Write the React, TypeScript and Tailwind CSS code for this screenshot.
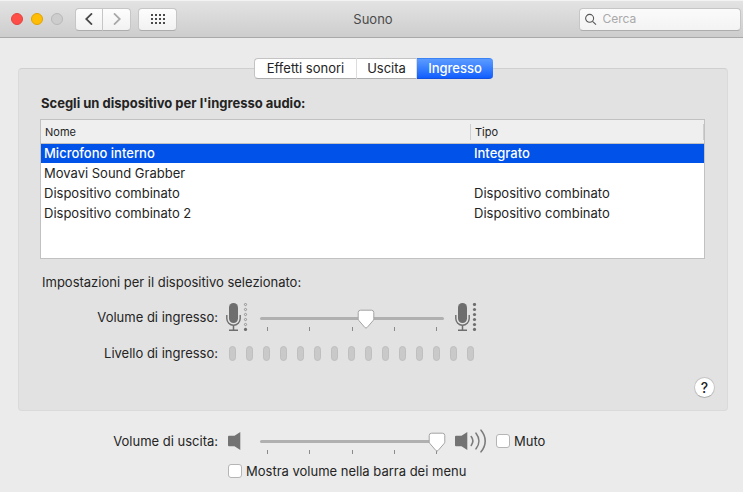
import { useState } from 'react';
import type { ReactNode } from 'react';

const tabs = [
  { label: 'Effetti sonori', width: 'w-[103px]' },
  { label: 'Uscita', width: 'w-[60px]' },
  { label: 'Ingresso', width: 'w-[76px]' },
];

const devices = [
  { name: 'Microfono interno', type: 'Integrato' },
  { name: 'Movavi Sound Grabber', type: '' },
  { name: 'Dispositivo combinato', type: 'Dispositivo combinato' },
  { name: 'Dispositivo combinato 2', type: 'Dispositivo combinato' },
];

const toolbarButton =
  'flex h-[23px] items-center justify-center border border-[#c6c6c6] border-b-[#adadad] bg-linear-to-b from-[#fdfdfd] to-[#f2f2f2]';

function Microphone({ full = false }: { full?: boolean }) {
  return (
    <svg width="23" height="28" viewBox="0 0 23 28" aria-hidden="true">
      <rect x="3" y="0" width="9" height="20" rx="4.5" fill="#6e6e6e" />
      <path d="M0.8 12v3.5a6.7 6.7 0 0 0 13.4 0V12" fill="none" stroke="#6e6e6e" strokeWidth="1.4" />
      <path d="M7.5 22.5v4.5M3 27.2h9" fill="none" stroke="#6e6e6e" strokeWidth="1.5" />
      {[1.5, 6.5, 11.5, 16.5, 21.5, 26.4].map((y) =>
        full || y > 26 ? (
          <circle key={y} cx="19.5" cy={y} r="1.6" fill="#6e6e6e" />
        ) : (
          <circle key={y} cx="19.5" cy={y} r="1.1" fill="none" stroke="#858585" strokeWidth="0.8" />
        ),
      )}
    </svg>
  );
}

function Speaker({ waves = false }: { waves?: boolean }) {
  return (
    <svg width="32" height="24" viewBox="0 0 32 24" aria-hidden="true">
      <path d="M0 7.8q0-1 1-1h5.5L12.3 3v18l-5.8-3.8H1q-1 0-1-1z" fill="#737373" />
      {waves && (
        <g fill="none" stroke="#7b7b7b" strokeWidth="1.6" strokeLinecap="round">
          <path d="M16.2 7.6c2 2.6 2 6.2 0 8.8" />
          <path d="M21 4.2c3.8 4.8 3.8 10.8 0 15.6" />
          <path d="M26 1.2c5.6 6.6 5.6 15 0 21.6" />
        </g>
      )}
    </svg>
  );
}

function Slider({ id, initial }: { id: string; initial: number }) {
  const [value, setValue] = useState(initial);

  return (
    <div className="relative h-7 w-[184px] self-start px-[7px] pt-[14px]">
      <div className="-mx-[7px] h-[3px] rounded-full bg-[#b0b0b0]" />
      <div className="mt-[7px] flex justify-between">
        {[0, 1, 2, 3, 4].map((tick) => (
          <span key={tick} className="h-1 w-px bg-[#8a8a8a]" />
        ))}
      </div>
      {/* Pointed knob, kept above the track */}
      <div className="pointer-events-none absolute inset-x-[7px] top-[6px]">
        <svg
          width="18"
          height="21"
          viewBox="0 0 18 21"
          className="relative -translate-x-1/2"
          style={{ left: `${value}%` }}
          aria-hidden="true"
        >
          <path
            d="M3.6 1.2h10.8q2.4 0 2.4 2.4v6.2q0 1-.8 1.9l-5.9 6.8q-1.1 1.2-2.2 0L2 11.7q-.8-.9-.8-1.9V3.6q0-2.4 2.4-2.4z"
            fill="#fff"
            stroke="#a3a3a3"
            strokeWidth="1"
          />
        </svg>
      </div>
      <input
        id={id}
        type="range"
        min={0}
        max={100}
        value={value}
        onChange={(e) => setValue(Number(e.target.value))}
        className="absolute inset-0 h-full w-full opacity-0"
      />
    </div>
  );
}

function Checkbox({ children }: { children: ReactNode }) {
  return (
    <label className="flex items-center gap-1">
      <input
        type="checkbox"
        className="size-[14px] appearance-none rounded-[3px] border border-[#b5b5b5] bg-white checked:bg-[#0a60ff]"
      />
      {children}
    </label>
  );
}

export default function App() {
  const [activeTab, setActiveTab] = useState('Ingresso');
  const [selected, setSelected] = useState(0);

  return (
    <div className="min-h-screen bg-[#ebebeb] pb-[11px] font-['Inter','Liberation_Sans',sans-serif] text-[13px] leading-5 text-[#242424]">
      <header className="grid h-[38px] grid-cols-[1fr_auto_1fr] items-center border-t border-b border-t-[#f3f3f3] border-b-[#a9a9a9] bg-linear-to-b from-[#e3e3e3] to-[#cdcdcd] pr-[2px] pl-[5px]">
        <div className="flex items-center pl-[6px]">
          <div className="flex gap-2">
            <button aria-label="Chiudi" className="size-3 rounded-full border border-[#e2443f] bg-[#ff4d47]" />
            <button aria-label="Riduci" className="size-3 rounded-full border border-[#e0a200] bg-[#ffbd05]" />
            <button aria-label="Ingrandisci" disabled className="size-3 rounded-full border border-[#b8b8b8] bg-[#cdcdcd]" />
          </div>
          <div className="ml-3 flex">
            <button aria-label="Indietro" className={`${toolbarButton} w-7 rounded-l-[4px]`}>
              <svg width="8" height="12" viewBox="0 0 8 12" fill="none" stroke="#484848" strokeWidth="1.8">
                <path d="M7 0.4 1.2 6 7 11.6" />
              </svg>
            </button>
            <button aria-label="Avanti" className={`${toolbarButton} w-7 rounded-r-[4px] border-l-0`}>
              <svg width="8" height="12" viewBox="0 0 8 12" fill="none" stroke="#a8a8a8" strokeWidth="1.8">
                <path d="M1 0.4 6.8 6 1 11.6" />
              </svg>
            </button>
          </div>
          <button aria-label="Mostra tutte" className={`${toolbarButton} ml-[7px] w-[39px] rounded-[4px]`}>
            <svg width="14" height="10" viewBox="0 0 14 10" fill="#4a4a4a">
              {[0, 4, 8].map((y) => [0, 4, 8, 12].map((x) => <rect key={`${x}-${y}`} x={x} y={y} width="2" height="2" />))}
            </svg>
          </button>
        </div>
        <h1 className="text-[#4a4a4a]">Suono</h1>
        <label className="flex h-[23px] w-[162px] items-center gap-[6px] justify-self-end rounded-[4px] border border-[#c6c6c6] border-b-[#adadad] bg-linear-to-b from-[#fbfbfb] to-[#f3f3f3] pl-[5px]">
          <svg width="13" height="13" viewBox="0 0 13 13" fill="none" stroke="#555" strokeWidth="1.2" aria-hidden="true">
            <circle cx="5.2" cy="5.2" r="4.5" />
            <path d="m8.5 8.5 3.9 3.9" />
          </svg>
          <input
            type="search"
            aria-label="Cerca"
            placeholder="Cerca"
            className="w-full min-w-0 bg-transparent text-[12px] outline-none placeholder:text-[#a9a9a9]"
          />
        </label>
      </header>

      <main className="mr-[15px] ml-[18px] pt-5">
        <div role="tablist" className="relative z-10 flex justify-center pl-px">
          {tabs.map((tab) => {
            const active = tab.label === activeTab;
            return (
              <button
                key={tab.label}
                role="tab"
                aria-selected={active}
                onClick={() => setActiveTab(tab.label)}
                className={`flex h-[21px] items-center justify-center border-y pb-px first:rounded-l-[4px] first:border-l last:rounded-r-[4px] ${tab.width} ${
                  active
                    ? 'border-y-[#3b82f5] border-b-[#1450e0] bg-linear-to-b from-[#5b9bff] to-[#0f5dff] font-medium text-white'
                    : 'border-r border-[#c3c3c3] border-r-[#dcdcdc] border-b-[#adadad] bg-white'
                }`}
              >
                {tab.label}
              </button>
            );
          })}
        </div>

        <section className="-mt-[11px] rounded-[4px] border border-[#dadada] border-t-[#cfcfcf] bg-[#e2e2e2] px-3 pt-6 pb-3">
          <div className="pr-[10px] pl-[9px]">
            <h2 className="pl-px font-bold">Scegli un dispositivo per l'ingresso audio:</h2>

            <div className="mt-[6px] min-h-[140px] border border-[#c1c1c1] bg-white">
              <table className="w-full table-fixed border-separate border-spacing-0 text-left">
                <thead>
                  <tr className="h-6 bg-[#efefef] text-[11px] leading-4">
                    <th className="w-[430px] border-b border-[#c1c1c1] p-0 font-normal">
                      <div className="border-r border-[#cfcfcf] pl-1">Nome</div>
                    </th>
                    <th className="border-b border-[#c1c1c1] p-0 font-normal">
                      <div className="border-r border-[#cfcfcf] pl-1">Tipo</div>
                    </th>
                  </tr>
                </thead>
                <tbody>
                  {devices.map((device, i) => (
                    <tr
                      key={device.name}
                      onClick={() => setSelected(i)}
                      className={`h-5 leading-[19px] ${i === selected ? 'bg-[#0052e8] font-medium text-white' : ''}`}
                    >
                      <td className="border-b border-white p-0 pl-[3px]">{device.name}</td>
                      <td className="border-b border-white p-0 pl-[3px]">{device.type}</td>
                    </tr>
                  ))}
                </tbody>
              </table>
            </div>

            <p className="mt-[13px] pl-[2px]">Impostazioni per il dispositivo selezionato:</p>

            <div className="mt-[11px] flex items-center">
              <label htmlFor="input-volume" className="w-[178px] pb-px text-right">
                Volume di ingresso:
              </label>
              <div className="ml-2 w-[34px]">
                <Microphone />
              </div>
              <Slider id="input-volume" initial={58} />
              <div className="ml-[11px]">
                <Microphone full />
              </div>
            </div>

            <div className="mt-3 flex items-center">
              <span id="level-label" className="w-[178px] text-right">
                Livello di ingresso:
              </span>
              <div role="meter" aria-labelledby="level-label" aria-valuenow={0} className="ml-[11px] flex gap-[10px]">
                {Array.from({ length: 15 }, (_, i) => (
                  <span key={i} className="h-[15px] w-[7px] rounded-full border border-[#bfbfbf] bg-[#c9c9c9]" />
                ))}
              </div>
            </div>
          </div>

          <div className="mt-[14px] flex justify-end">
            <button
              aria-label="Aiuto"
              className="flex size-[21px] items-center justify-center rounded-full border border-[#c4c4c4] border-b-[#adadad] bg-white text-[14px] font-medium"
            >
              ?
            </button>
          </div>
        </section>

        <div className="mt-[15px] flex h-[30px] items-center">
          <label htmlFor="output-volume" className="w-[200px] text-right">
            Volume di uscita:
          </label>
          <div className="ml-[10px] w-8">
            <Speaker />
          </div>
          <Slider id="output-volume" initial={100} />
          <div className="mr-[9px] ml-[11px]">
            <Speaker waves />
          </div>
          <Checkbox>Muto</Checkbox>
        </div>

        <div className="mt-[5px] flex pl-[210px]">
          <Checkbox>Mostra volume nella barra dei menu</Checkbox>
        </div>
      </main>
    </div>
  );
}
